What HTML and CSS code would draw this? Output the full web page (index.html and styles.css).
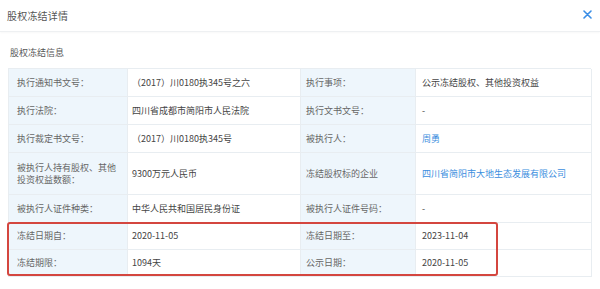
FILE: index.html
```html
<!DOCTYPE html>
<html lang="zh-CN">
<head>
<meta charset="utf-8">
<link rel="stylesheet" href="styles.css">
</head>
<body>
<div class="header">
  <span class="title">股权冻结详情</span>
  <svg class="close" width="9" height="9" viewBox="0 0 9 9"><path d="M1 1 L8 8 M8 1 L1 8" stroke="#3a8ee6" stroke-width="1.6" stroke-linecap="round"/></svg>
</div>
<div class="section-title">股权冻结信息</div>
<div class="table-wrap">
  <div class="grid">
    <div class="lab l1">执行通知书文号：</div>
    <div class="val v1">（2017）川0180执345号之六</div>
    <div class="lab l2">执行事项：</div>
    <div class="val v2">公示冻结股权、其他投资权益</div>

    <div class="lab l1">执行法院：</div>
    <div class="val v1">四川省成都市简阳市人民法院</div>
    <div class="lab l2">执行文书文号：</div>
    <div class="val v2">-</div>

    <div class="lab l1">执行裁定书文号：</div>
    <div class="val v1">（2017）川0180执345号</div>
    <div class="lab l2">被执行人：</div>
    <div class="val v2 link">周勇</div>

    <div class="lab l1 tall">被执行人持有股权、其他<br>投资权益数额：</div>
    <div class="val v1 tall">9300万元人民币</div>
    <div class="lab l2 tall">冻结股权标的企业</div>
    <div class="val v2 tall link">四川省简阳市大地生态发展有限公司</div>

    <div class="lab l1">被执行人证件种类：</div>
    <div class="val v1">中华人民共和国居民身份证</div>
    <div class="lab l2">被执行人证件号码：</div>
    <div class="val v2">-</div>

    <div class="lab l1 r27">冻结日期自：</div>
    <div class="val v1 r27">2020-11-05</div>
    <div class="lab l2 r27">冻结日期至：</div>
    <div class="val v2 r27">2023-11-04</div>

    <div class="lab l1 r27">冻结期限：</div>
    <div class="val v1 r27">1094天</div>
    <div class="lab l2 r27">公示日期：</div>
    <div class="val v2 r27">2020-11-05</div>
  </div>
  <div class="highlight"></div>
</div>
</body>
</html>
```
FILE: styles.css
```css
html, body {
  margin: 0;
  padding: 0;
  background: #fff;
  font-family: "Noto Sans CJK SC", "Noto Sans", sans-serif;
}
.header {
  height: 31px;
  padding: 0 8px 0 7px;
  display: flex;
  align-items: center;
  justify-content: space-between;
  border-bottom: 1px solid #eef0f2;
  box-shadow: 0 1px 2px rgba(0,0,0,0.03);
}
.title {
  font-size: 10px;
  color: #555;
  letter-spacing: 0.2px;
}
.close {
  display: block;
  margin-top: -2px;
}
.section-title {
  font-size: 9px;
  color: #555;
  padding-left: 10px;
  height: 12px;
  line-height: 12px;
  margin-top: 15px;
}
.table-wrap {
  position: relative;
  margin: 9px 0 0 8px;
  width: 583px;
}
.grid {
  display: grid;
  grid-template-columns: 119px 173px 115px 176px;
  border-top: 1px solid #e8edf1;
  border-left: 1px solid #e8edf1;
}
.lab, .val {
  height: 27px;
  display: flex;
  align-items: center;
  font-size: 9px;
  line-height: 12px;
  border-right: 1px solid #e8edf1;
  border-bottom: 1px solid #e8edf1;
  box-sizing: content-box;
}
.lab {
  background: #eef6fc;
  color: #666;
}
.val {
  background: #fff;
  color: #444;
}
.l1 { padding-left: 8px; }
.l2 { padding-left: 5px; }
.v1 { padding-left: 4px; }
.v2 { padding-left: 6px; }
.tall { height: 41px; }
.r27 { height: 26px; }
.link { color: #3b8ede; }
.highlight {
  position: absolute;
  left: -1px;
  top: 154px;
  width: 487px;
  height: 50px;
  border: 2px solid #d4463f;
  border-radius: 3px;
}
```
